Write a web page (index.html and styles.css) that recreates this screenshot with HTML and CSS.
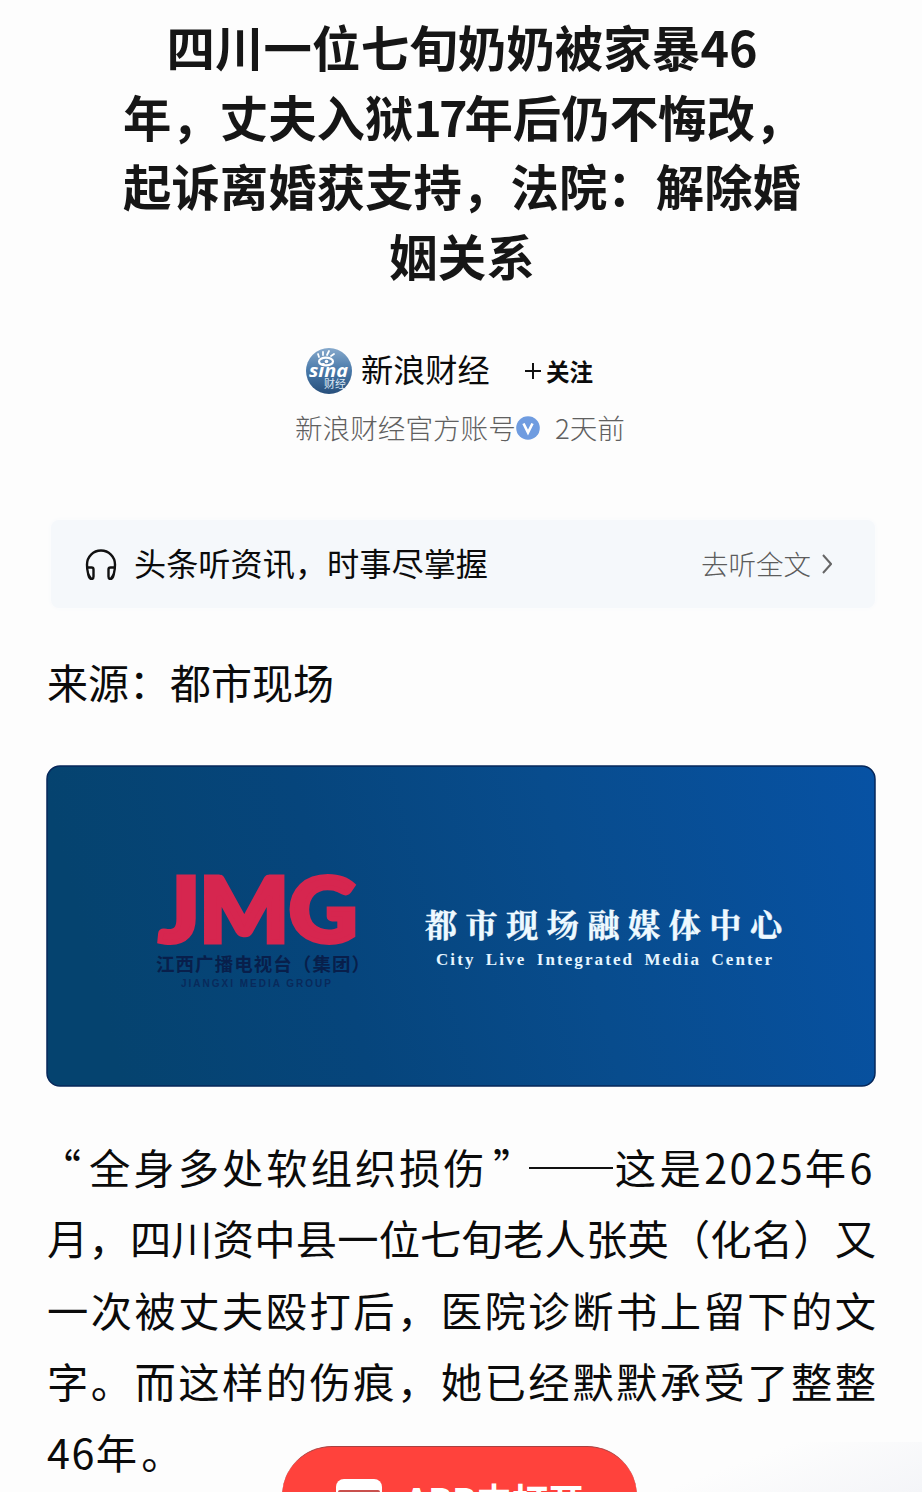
FILE: index.html
```html
<!DOCTYPE html>
<html lang="zh-CN">
<head>
<meta charset="utf-8">
<title>四川一位七旬奶奶被家暴46年</title>
<link rel="stylesheet" href="styles.css">
</head>
<body>
<main class="page">
  <h1 class="title">
    <span class="title-line title-first">四川一位七旬奶奶被家暴46</span>
    <span class="title-line">年，丈夫入狱<span class="tight">17</span>年后仍不悔改，</span>
    <span class="title-line">起诉离婚获支持，法院：解除婚</span>
    <span class="title-line title-last">姻关系</span>
  </h1>

  <section class="author">
    <svg class="avatar" viewBox="0 0 48 48">
      <defs>
        <linearGradient id="ball" x1="0" y1="0" x2="0" y2="1">
          <stop offset="0" stop-color="#86a9cc"/>
          <stop offset=".5" stop-color="#4878a8"/>
          <stop offset="1" stop-color="#274f7b"/>
        </linearGradient>
      </defs>
      <circle cx="24" cy="24" r="23" fill="url(#ball)"/>
      <ellipse cx="21" cy="14.500" rx="7" ry="3.800" fill="none" stroke="#fff" stroke-width="2.200"/>
      <circle cx="21.500" cy="14.500" r="1.800" fill="#fff"/>
      <path d="M14 10l-1-3M18 8l0-3M22 8l2-4M26 9l3-2" stroke="#fff" stroke-width="1.800" stroke-linecap="round"/>
      <text class="sina" x="4" y="30" textLength="39" lengthAdjust="spacingAndGlyphs">sina</text>
      <text class="sina-sub" x="19" y="41" textLength="22" lengthAdjust="spacingAndGlyphs">财经</text>
    </svg>
    <span class="name">新浪财经</span>
    <span class="follow"><svg class="plus" viewBox="0 0 16 16"><path d="M8 0v16M0 8h16"/></svg>关注</span>
  </section>
  <section class="meta">
    <span class="account">新浪财经官方账号</span>
    <svg class="badge" viewBox="0 0 24 24"><circle cx="12" cy="12" r="11.800" fill="#6f9ce0"/><path d="M7.500 7.500l4.500 9 4.500-9" fill="none" stroke="#fff" stroke-width="2.600"/></svg>
    <span class="time">2天前</span>
  </section>

  <section class="listen">
    <svg class="phones" viewBox="0 0 32 32"><path d="M6 30.500C2.500 27 2 23 2 16.500a14 14 0 0 1 28 0c0 6.500-.5 10.500-4 14M2.500 19.500h4q2 0 2 2v7q0 2.500-2 2.500H6q-2.500-1-3-6M29.500 19.500h-4q-2 0-2 2v7q0 2.500 2 2.500h.5q2.500-1 3-6"/></svg>
    <span class="listen-title">头条听资讯，时事尽掌握</span>
    <span class="listen-more">去听全文</span>
    <svg class="chevron" viewBox="0 0 10 20"><path d="M1 1l8 9-8 9"/></svg>
  </section>

  <p class="source">来源：都市现场</p>

  <svg class="banner" viewBox="0 0 830 322">
    <defs>
      <linearGradient id="sea" x1="0" y1="0.100" x2="1" y2="0">
        <stop offset="0" stop-color="#05436f"/>
        <stop offset=".3" stop-color="#06457c"/>
        <stop offset=".6" stop-color="#084c8d"/>
        <stop offset="1" stop-color="#0752a4"/>
      </linearGradient>
    </defs>
    <rect x="1" y="1" width="828" height="320" rx="13" fill="url(#sea)" stroke="#06275a" stroke-width="1.500"/>
    <text class="jmg" x="113" y="177" textLength="198" lengthAdjust="spacingAndGlyphs">JMG</text>
    <text class="group" x="110" y="206" textLength="214">江西广播电视台（集团）</text>
    <text class="group-en" x="135" y="222" textLength="152" lengthAdjust="spacingAndGlyphs">JIANGXI MEDIA GROUP</text>
    <text class="center" x="379" y="172" textLength="357">都市现场融媒体中心</text>
    <text class="center-en" x="390" y="200" textLength="336">City Live Integrated Media Center</text>
  </svg>

  <article class="story">
    <div class="row row-quote"><span class="open">“</span><span class="fill quoted">全身多处软组织损伤</span><span class="close">”</span><span class="dash"></span><span class="after">这是<span class="wide">2025</span>年6</span></div>
    <div class="row fill">月，四川资中县一位七旬老人张英（化名）又</div>
    <div class="row fill">一次被丈夫殴打后，医院诊断书上留下的文</div>
    <div class="row fill">字。而这样的伤痕，她已经默默承受了整整</div>
    <div class="row"><span class="wide">46</span>年<span class="stop">。</span></div>
  </article>

  <div class="haze"></div>
  <div class="open-app">
    <svg class="app-icon" viewBox="0 0 46 40"><rect width="46" height="40" rx="8" fill="#fff"/><rect x="2" y="11" width="42" height="27" rx="2" fill="#c9504e"/></svg>
    <span>APP内打开</span>
  </div>
</main>
</body>
</html>
```
FILE: styles.css
```css
* { box-sizing: border-box; }
body {
  margin: 0;
  background: #fdfdfd;
  color: #0b0b0b;
  font-family: "Noto Sans CJK SC", sans-serif;
}
.page {
  position: relative;
  width: 922px;
  height: 1492px;
  overflow: hidden;
  padding: 12px 46px 0;
}
.title {
  margin: 0 -1px 0 1px;
  height: 334px;
  display: flex;
  flex-direction: column;
  align-items: center;
  font-size: 48.400px;
  font-weight: 700;
  line-height: 69.500px;
  color: #161616;
}
.title-line {
  width: 678px;
  white-space: nowrap;
  text-align-last: justify;
}
.title-first { width: 591px; }
.title-last { width: 146px; }
.tight { letter-spacing: -3px; }

.author {
  display: flex;
  align-items: center;
  height: 50px;
  margin-left: 259px;
}
.avatar { width: 48px; height: 48px; }
.sina { font: italic 700 18px "Open Sans", sans-serif; fill: #fff; }
.sina-sub { font-size: 11px; fill: #dce8f4; }
.name { margin-left: 8px; width: 129px; padding-bottom: 7px; font-size: 32.200px; line-height: 46px; white-space: nowrap; }
.follow {
  display: flex;
  align-items: center;
  margin-left: 35px;
  padding-bottom: 1px;
  font-size: 23.500px;
  font-weight: 700;
  line-height: 34px;
}
.plus { width: 16px; height: 16px; margin-right: 5px; fill: none; stroke: #111; stroke-width: 2; }

.meta {
  display: flex;
  align-items: center;
  height: 40px;
  margin: 12px 0 0 249px;
  font-size: 27.600px;
  font-weight: 300;
  color: #606060;
  line-height: 38px;
}
.account { width: 221px; white-space: nowrap; padding-bottom: 2px; }
.badge { width: 24px; height: 24px; }
.time { margin-left: 15px; padding-bottom: 2px; }

.listen {
  display: flex;
  align-items: center;
  height: 88px;
  margin: 72px 1px 0 5px;
  padding: 0 43px 0 34px;
  border-radius: 8px;
  background: #f5f8fb;
  box-shadow: 0 0 5px #f7f9fc;
}
.phones { width: 32px; height: 32px; fill: none; stroke: #111; stroke-width: 2.400; }
.listen-title { margin-left: 17px; padding-bottom: 5px; font-size: 32.200px; }
.listen-more { margin-left: auto; padding-bottom: 2px; font-size: 27.500px; font-weight: 300; color: #5c5c5c; }
.chevron { width: 10px; height: 20px; margin-left: 11px; fill: none; stroke: #666; stroke-width: 2; }

.source {
  margin: 43px 0 0 1px;
  height: 61px;
  font-size: 41px;
  line-height: 60px;
}
.banner { display: block; width: 830px; height: 322px; margin-top: 53px; }
.jmg { font: 900 90px Lato, sans-serif; fill: #d6264f; stroke: #d6264f; stroke-width: 5; }
.group { font-size: 18.500px; font-weight: 700; fill: #081f4b; }
.group-en { font: 700 10px "Liberation Sans", sans-serif; letter-spacing: 2px; fill: #092a5b; }
.center { font-family: "Noto Serif CJK SC", "Noto Sans CJK SC", serif; font-size: 32px; font-weight: 700; fill: #eef9ff; stroke: #eef9ff; stroke-width: 0.500; }
.center-en { font: 700 17px "Liberation Serif", serif; word-spacing: 4px; fill: #e4f5ff; }

.story {
  margin: 44px 0 0 1px;
  width: 829px;
  font-size: 41.300px;
  line-height: 71px;
}
.row { height: 71.300px; white-space: nowrap; }
.fill { text-align-last: justify; }
.row-quote { display: flex; }
.open { width: 42px; padding-right: 8px; display: flex; justify-content: flex-end; }
.quoted { width: 397px; }
.close { width: 42px; padding-left: 8px; }
.dash { width: 84px; height: 2px; margin: 36px 2px 0 2px; background: #111; }
.after { flex: 1; letter-spacing: 3.500px; }
.row-quote .wide { letter-spacing: 2.200px; }
.wide { letter-spacing: 1.500px; }
.stop { padding-left: 4px; }

.haze {
  position: absolute;
  right: 0;
  bottom: 0;
  width: 270px;
  height: 50px;
  background: linear-gradient(160deg, #fdfdfd 35%, #f4f5f8);
}
.open-app {
  position: absolute;
  left: 282px;
  top: 1446px;
  width: 355px;
  height: 100px;
  border-radius: 50px;
  border-top: 1px solid #a84040;
  background: #ff423c;
  color: #fff;
  display: flex;
  padding: 32px 0 0 54px;
  font-size: 36px;
  font-weight: 700;
  line-height: 40px;
  white-space: nowrap;
}
.app-icon { width: 46px; height: 40px; margin-right: 23px; }
```
